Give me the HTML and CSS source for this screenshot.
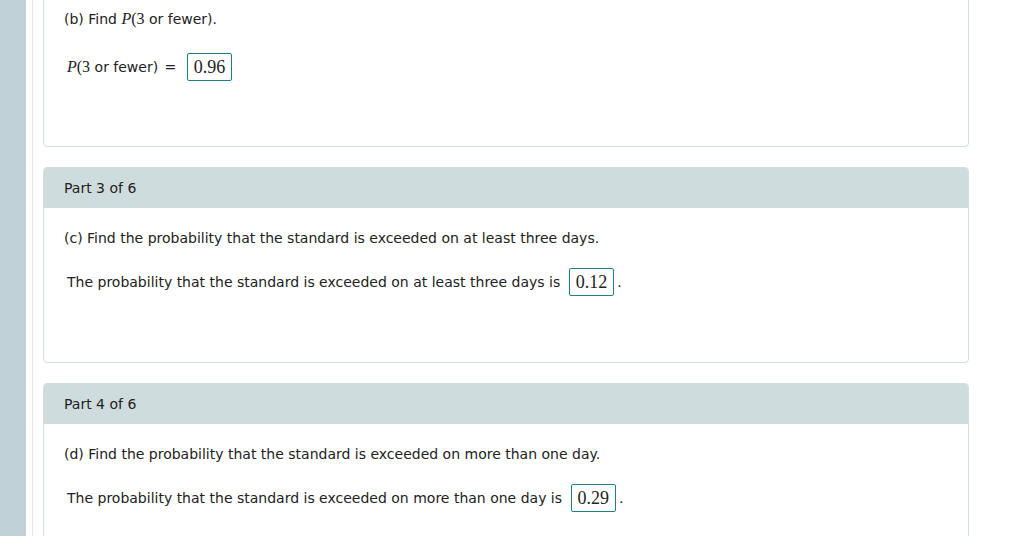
FILE: index.html
```html
<!DOCTYPE html>
<html>
<head>
    <title>Parts</title>
    <meta charset="utf-8">
    <link rel="stylesheet" href="styles.css">
</head>
<body>
    <div class="sidebar"></div>
    <div class="rule"></div>
    <div class="main">
        <div class="card first">
            <div class="body">
                <p class="question">(b) Find <span class="math"><i>P</i>(3</span> or fewer).</p>
                <p class="answer"><span class="math"><i>P</i>(3</span> or fewer) <span class="eq">=</span> <span class="box">0.96</span></p>
            </div>
        </div>

        <div class="card">
            <div class="head">Part 3 of 6</div>
            <div class="body">
                <p class="question">(c) Find the probability that the standard is exceeded on at least three days.</p>
                <p class="answer">The probability that the standard is exceeded on at least three days is <span class="box">0.12</span>.</p>
            </div>
        </div>

        <div class="card">
            <div class="head">Part 4 of 6</div>
            <div class="body">
                <p class="question">(d) Find the probability that the standard is exceeded on more than one day.</p>
                <p class="answer">The probability that the standard is exceeded on more than one day is <span class="box">0.29</span>.</p>
            </div>
        </div>
    </div>
</body>
</html>
```

FILE: styles.css
```css
body {
    margin: 0;
    height: 536px;
    overflow: hidden;
    display: flex;
    background: #fff;
    color: #222;
    font-family: "DejaVu Sans", Verdana, sans-serif;
    font-size: 14px;
}
.sidebar {
    width: 26px;
    flex: none;
    background: #bfd0d6;
}
.rule {
    width: 1px;
    flex: none;
    margin-left: 6px;
    background: #e4e7e8;
}
.main {
    width: 926px;
    padding-left: 10px;
}
.card {
    border: 1px solid #d2dee0;
    border-radius: 4px;
    margin-bottom: 20px;
    overflow: hidden;
}
.card.first {
    margin-top: -12px;
}
.head {
    height: 40px;
    line-height: 40px;
    padding-left: 20px;
    background: #cfdcde;
}
.body {
    padding: 20px 20px 66px 20px;
}
.question {
    margin: 0;
    height: 20px;
    line-height: 20px;
}
.answer {
    margin: 20px 0 0 3px;
    height: 28px;
    line-height: 28px;
}
.first .answer {
    margin-top: 24px;
}
.first .body {
    padding-bottom: 65px;
}
.math {
    font-family: "Liberation Serif", "Times New Roman", serif;
    font-size: 16px;
}
.eq {
    margin: 0 2px;
}
.box {
    display: inline-block;
    vertical-align: middle;
    box-sizing: border-box;
    height: 28px;
    line-height: 26px;
    padding: 0 6px;
    border: 1px solid #1f7d8c;
    border-radius: 2px;
    font-family: "Liberation Serif", "Times New Roman", serif;
    font-size: 18px;
    margin: -3px 3px 0 4px;
}
```
